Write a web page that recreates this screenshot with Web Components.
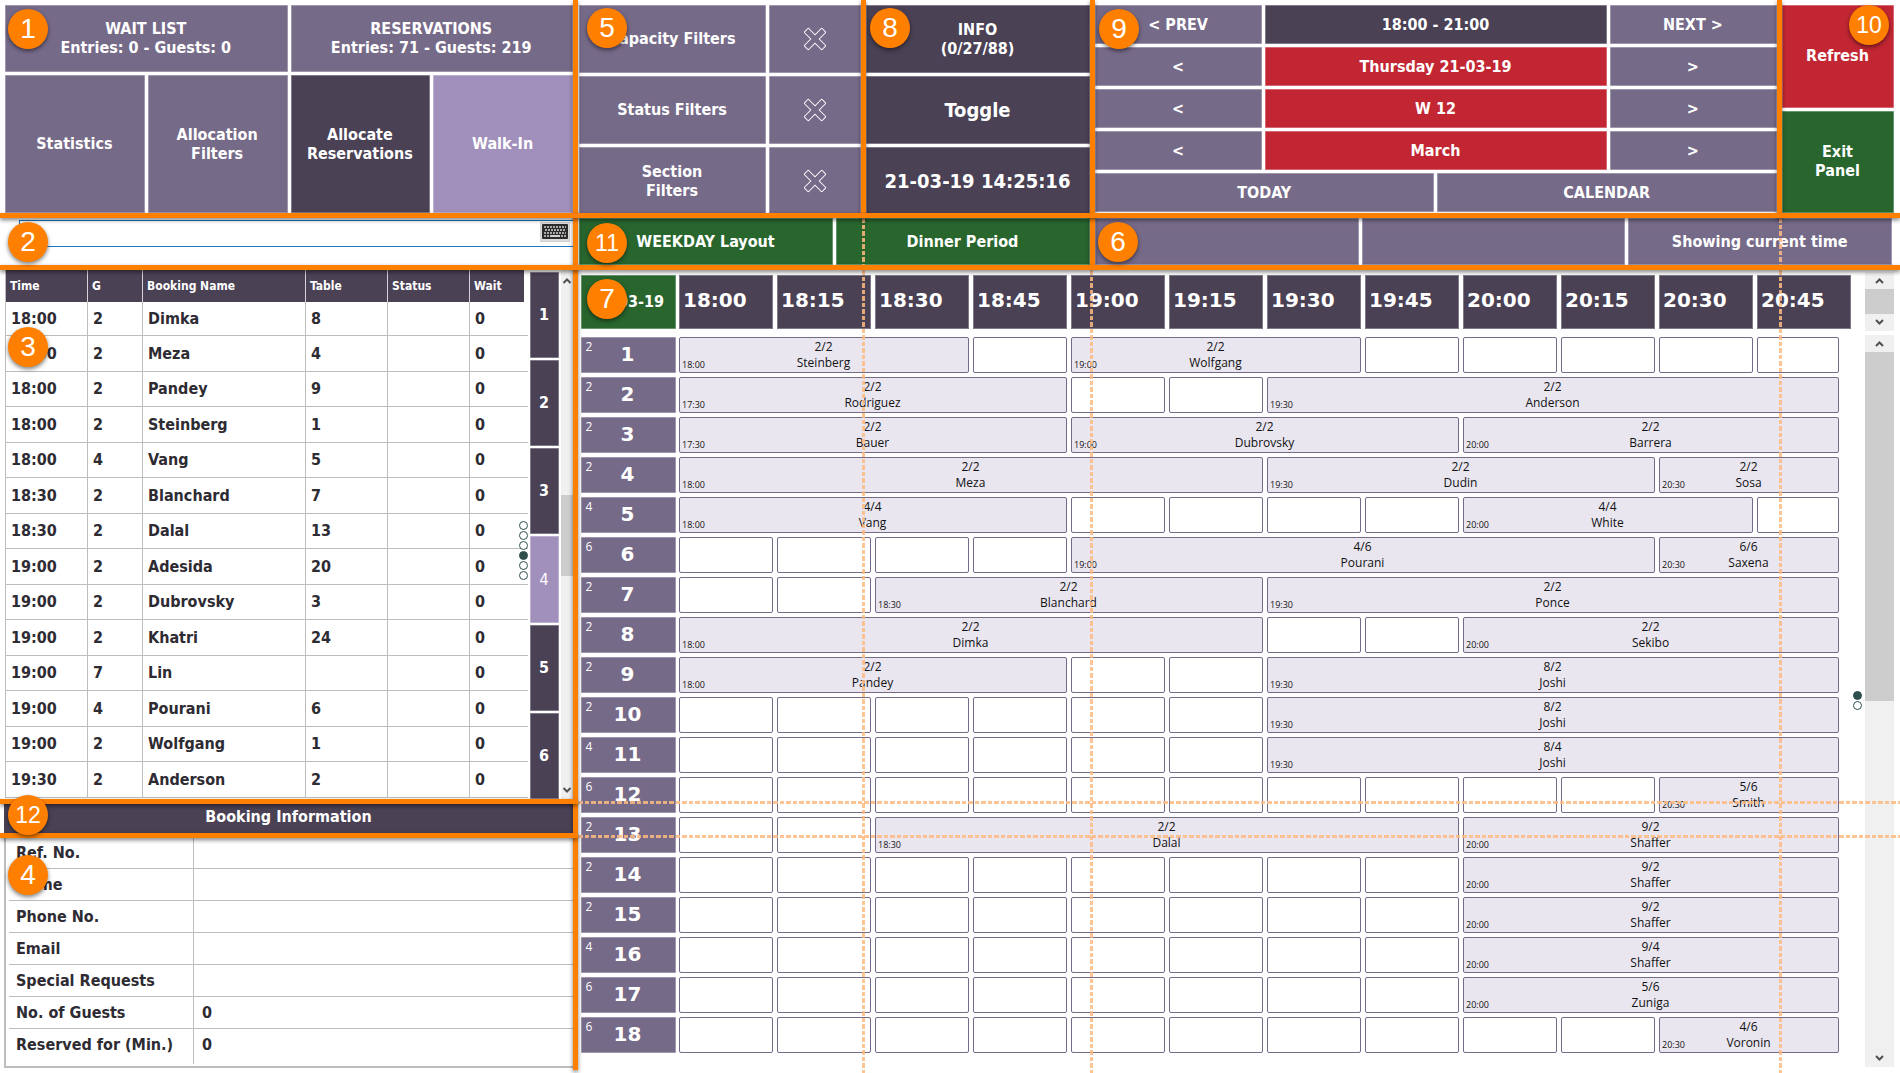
<!DOCTYPE html>
<html lang="en">
<head>
<meta charset="utf-8">
<title>Reservation Panel</title>
<style>
  html, body { margin: 0; background: #fff; }
  body {
    font-family: "DejaVu Sans Condensed", "DejaVu Sans", Tahoma, sans-serif;
    font-size: 16px; line-height: 19px; font-weight: 700; color: #2e2b33;
    --violet: #766a89; --dark: #4a4155; --lilac: #a18fbc; --red: #c22633; --green: #28662e;
    --orange: #ff8000; --rule: #bdbdbd; --cell: #e9e6f0;
    --ui: "Open Sans", "Noto Sans", sans-serif;
    --wide: "DejaVu Sans", Verdana, sans-serif;
  }
</style>
</head>
<body>
<reservation-panel></reservation-panel>

<script>
function define(name, markup, setup) {
  const template = document.createElement('template');
  template.innerHTML = markup;
  customElements.define(name, class extends HTMLElement {
    constructor() {
      super();
      this.attachShadow({ mode: 'open' }).append(template.content.cloneNode(true));
    }
    connectedCallback() {
      if (setup && !this.ready) { this.ready = true; setup(this, this.shadowRoot); }
    }
  });
}

/* Touch-style button; tone picks the fill */
define('panel-button', `
<style>
  :host { display: grid; min-width: 0; --fill: var(--violet); }
  :host([tone=dark]) { --fill: var(--dark); }
  :host([tone=lilac]) { --fill: var(--lilac); }
  :host([tone=red]) { --fill: var(--red); }
  :host([tone=green]) { --fill: var(--green); }
  button {
    margin: 0; padding: 0 5px 1px 4px; border: 0; border-radius: 1px; background: var(--fill); color: #fff;
    font: inherit; text-align: center; cursor: pointer; min-width: 0;
    box-shadow: inset 0 0 0 1px rgba(255, 255, 255, .3);
  }
  :host([size=large]) button { font-size: 20px; line-height: 24px; }
</style>
<button type="button"><slot></slot></button>`);

define('clear-icon', `
<style>:host { display: block; } svg { display: block; margin: auto; }</style>
<svg width="24" height="24" viewBox="-12 -12 24 24" aria-hidden="true">
  <path transform="rotate(45)" d="M-2-12.5H2Q3-12.5 3-11.5V-3H11.5Q12.5-3 12.5-2V2Q12.5 3 11.5 3H3V11.5Q3 12.5 2 12.5H-2Q-3 12.5-3 11.5V3H-11.5Q-12.5 3-12.5 2V-2Q-12.5-3-11.5-3H-3V-11.5Q-3-12.5-2-12.5Z" fill="none" stroke="#fff" stroke-width="1"/>
</svg>`);

/* Numbered callout floating over a panel */
define('callout-badge', `
<style>
  :host {
    position: absolute; z-index: 6; width: 40px; height: 40px; border-radius: 50%;
    background: var(--orange); color: #fff; display: grid; place-items: center;
    font: 400 28px/32px "Liberation Sans", Arial, sans-serif;
    box-shadow: 0 2px 4px rgba(0, 0, 0, .5); pointer-events: none;
  }
  :host([wide]) { font-size: 23px; }
</style>
<slot></slot>`);

define('page-dots', `
<style>
  :host { position: absolute; z-index: 1; display: grid; gap: 1px; }
  i { width: 7px; height: 7px; border: 1px solid #2f4f4f; border-radius: 50%; background: #fff; }
  i.on { background: #2f4f4f; }
</style>`, (el, root) => {
  const current = +el.getAttribute('current');
  for (let n = 1; n <= +el.getAttribute('count'); n++) {
    const dot = document.createElement('i');
    if (n === current) dot.className = 'on';
    root.append(dot);
  }
});

define('scroll-strip', `
<style>
  :host { display: flex; flex-direction: column; background: #f0f0f0; }
  svg { flex: none; width: 100%; height: 17px; display: block; }
  path { fill: none; stroke: #505050; stroke-width: 2; }
  .thumb { background: #cdcdcd; min-height: 8px; }
</style>
<svg viewBox="3 0 11 17"><path d="M5 11L8.500 7.500L12 11"/></svg>
<div class="before"></div><div class="thumb"></div><div class="after"></div>
<svg viewBox="3 0 11 17"><path d="M5 6L8.500 9.500L12 6"/></svg>`,
(el, root) => {
  const [a, b, c] = el.getAttribute('parts').split(' ');
  root.querySelector('.before').style.flex = a + ' 0 0';
  root.querySelector('.thumb').style.flex = b + ' 0 0';
  root.querySelector('.after').style.flex = c + ' 0 0';
});

define('search-box', `
<style>
  :host { display: block; padding: 2px 0 0 19px; }
  .field { display: flex; align-items: flex-start; height: 25px; border: 1px solid #1a77c4; border-right: 0; }
  input { flex: 1; min-width: 0; height: 25px; padding: 0 36px; border: 0; outline: 0; background: none; font: inherit; box-sizing: border-box; }
  button { margin: 1px 3px 0 0; padding: 0; width: 30px; height: 20px; border: 1px solid #d0d0d0; background: #dcdcdc; display: grid; justify-items: center; align-items: start; }
  svg { display: block; padding-top: 1px; }
</style>
<div class="field">
  <input type="text" aria-label="Search bookings">
  <button type="button" aria-label="On-screen keyboard">
    <svg width="26" height="15" viewBox="0 0 26 15">
      <rect width="26" height="15" rx="1" fill="#2c2c2c"/>
      <g stroke="#a8a8a8" stroke-width="2" stroke-dasharray="2 1">
        <path d="M2 3H24"/><path d="M3 6H24"/><path d="M2 9H24"/><path d="M2 12H7"/><path d="M19 12H24"/>
      </g>
      <path d="M8 12H18" stroke="#cfcfcf" stroke-width="2"/>
    </svg>
  </button>
</div>`);

define('booking-list', `
<style>
  :host { display: flex; gap: 2px; padding-left: 5px; }
  table { flex: 1; min-width: 0; table-layout: fixed; border-collapse: separate; border-spacing: 0; align-self: flex-start; }
  col.time { width: 83px; } col.g { width: 55px; } col.mid { width: 82px; } col.wait { width: 58px; }
  th { height: 32px; box-sizing: border-box; padding: 0 0 0 4px; background: var(--dark); color: #fff; font-size: 12px; line-height: 16px; text-align: left; border-right: 1px solid #d5d2da; }
  th:last-child { border-right: 4px solid #fff; }
  td { height: 36px; box-sizing: border-box; padding: 0 0 1px 5px; border-right: 1px solid var(--rule); border-bottom: 1px solid var(--rule); }
  td:last-child { border-right: 0; }
  tr:nth-child(odd) td { height: 35px; }
  tbody tr:first-child td { height: 34px; }
  td:first-child, th:first-child { border-left: 1px solid var(--rule); }
  nav { width: 29px; display: grid; grid-auto-rows: 1fr; gap: 2px; padding-top: 2px; background: #fff; }
  scroll-strip { width: 12px; padding-top: 2px; }
  .four { font-weight: 400; }
</style>
<table>
  <colgroup><col class="time"><col class="g"><col><col class="mid"><col class="mid"><col class="wait"></colgroup>
  <thead><tr><th>Time</th><th>G</th><th>Booking Name</th><th>Table</th><th>Status</th><th>Wait</th></tr></thead>
  <tbody></tbody>
</table>
<nav>
  <panel-button tone="dark">1</panel-button><panel-button tone="dark">2</panel-button>
  <panel-button tone="dark">3</panel-button><panel-button tone="lilac" class="four">4</panel-button>
  <panel-button tone="dark">5</panel-button><panel-button tone="dark">6</panel-button>
</nav>
<scroll-strip parts="206 82 206"></scroll-strip>`, (el, root) => {
  const rows = [
    ['18:00', 2, 'Dimka', 8], ['18:00', 2, 'Meza', 4], ['18:00', 2, 'Pandey', 9], ['18:00', 2, 'Steinberg', 1],
    ['18:00', 4, 'Vang', 5], ['18:30', 2, 'Blanchard', 7], ['18:30', 2, 'Dalal', 13], ['19:00', 2, 'Adesida', 20],
    ['19:00', 2, 'Dubrovsky', 3], ['19:00', 2, 'Khatri', 24], ['19:00', 7, 'Lin', ''], ['19:00', 4, 'Pourani', 6],
    ['19:00', 2, 'Wolfgang', 1], ['19:30', 2, 'Anderson', 2]];
  const body = root.querySelector('tbody');
  for (const row of rows) {
    const tr = body.insertRow();
    for (const value of [...row, '', 0]) tr.insertCell().textContent = value;
  }
});

define('booking-details', `
<style>
  :host { display: block; }
  .frame { margin: 0 0 5px 4px; padding: 0 0 2px 3px; border-left: 2px solid var(--rule); border-bottom: 2px solid var(--rule); }
  table { width: 100%; border-collapse: separate; border-spacing: 0; table-layout: fixed; }
  col:first-child { width: 185px; }
  th, td { box-sizing: border-box; height: 32px; border-bottom: 1px solid var(--rule); text-align: left; }
  th { padding: 0 0 1px 7px; border-right: 1px solid var(--rule); }
  td { padding: 0 0 1px 8px; }
  tr:first-child > * { height: 31px; }
  tr:last-child > * { height: 35px; border-bottom: 0; padding-bottom: 5px; }
</style>
<div class="frame"><table>
  <colgroup><col><col></colgroup>
  <tbody>
    <tr><th scope="row">Ref. No.</th><td></td></tr>
    <tr><th scope="row">Name</th><td></td></tr>
    <tr><th scope="row">Phone No.</th><td></td></tr>
    <tr><th scope="row">Email</th><td></td></tr>
    <tr><th scope="row">Special Requests</th><td></td></tr>
    <tr><th scope="row">No. of Guests</th><td>0</td></tr>
    <tr><th scope="row">Reserved for (Min.)</th><td>0</td></tr>
  </tbody>
</table></div>`);

define('table-timeline', `
<style>
  :host { display: flex; gap: 14px; padding: 0 6px 0 3px; }
  .main { flex: 1; min-width: 0; padding-top: 5px; }
  .head, .row { display: grid; grid-template-columns: 95px minmax(0, 1fr); grid-template-rows: minmax(0, 1fr); gap: 3px; }
  .head { height: 54px; margin-bottom: 8px; }
  .slots { display: grid; grid-template-columns: repeat(12, minmax(0, 1fr)); grid-template-rows: minmax(0, 1fr); gap: 4px; }
  .hour { display: flex; align-items: center; padding: 0 0 4px 4px; background: var(--dark); color: #fff; font: 700 20px/26px var(--wide); box-shadow: inset 0 0 0 1px rgba(255, 255, 255, .3); }
  .row { height: 36px; margin-bottom: 4px; }
  button { margin: 0; padding: 0; font: inherit; cursor: pointer; }
  .table {
    display: grid; grid-template-columns: 20px 1fr 20px; align-items: center; border: 0; border-radius: 1px;
    padding: 0 2px 2px 0;
    background: var(--violet); color: #fff; box-shadow: inset 0 0 0 1px rgba(255, 255, 255, .3);
    font: 700 20px/26px var(--wide);
  }
  .table small { align-self: start; padding-top: 2px; font: 400 12px/16px var(--ui); padding-left: 2px; text-align: center; width: 12px; }
  .slot { box-sizing: border-box; border: 1px solid var(--violet); border-radius: 2px; background: #fff; }
  .slot.last { margin-right: 12px; }
  .booking {
    display: grid; grid-template-columns: 32px minmax(0, 1fr) 32px; align-items: center; background: var(--cell);
    color: #111; font: 400 12px/16px var(--ui); text-align: center; padding: 0 1px 1px 0;
  }
  .booking time { align-self: end; font-size: 9px; line-height: 12px; padding-left: 2px; text-align: left; }
  aside { width: 29px; padding: 2px 0 6px; display: flex; flex-direction: column; gap: 4px; }
  aside .short { height: 59px; }
  aside .long { flex: 1; }
</style>
<div class="main">
  <div class="head"><panel-button tone="green">21-03-19</panel-button><div class="slots hours"></div></div>
</div>
<aside><scroll-strip class="short" parts="0 25 0"></scroll-strip><scroll-strip class="long" parts="0 349 349"></scroll-strip></aside>`,
(el, root) => {
  const make = (tag, cls, text) => {
    const node = document.createElement(tag);
    node.className = cls || '';
    if (text !== undefined) node.textContent = text;
    return node;
  };
  const hours = root.querySelector('.hours');
  for (let n = 0; n < 12; n++) {
    hours.append(make('div', 'hour', (18 + (n >> 2)) + ':' + String(n % 4 * 15).padStart(2, '0')));
  }
  /* per table: capacity, then bookings as [first slot, slots, covers, name, start] */
  const tables = [
    [2, [1, 3, '2/2', 'Steinberg', '18:00'], [5, 3, '2/2', 'Wolfgang', '19:00']],
    [2, [1, 4, '2/2', 'Rodriguez', '17:30'], [7, 6, '2/2', 'Anderson', '19:30']],
    [2, [1, 4, '2/2', 'Bauer', '17:30'], [5, 4, '2/2', 'Dubrovsky', '19:00'], [9, 4, '2/2', 'Barrera', '20:00']],
    [2, [1, 6, '2/2', 'Meza', '18:00'], [7, 4, '2/2', 'Dudin', '19:30'], [11, 2, '2/2', 'Sosa', '20:30']],
    [4, [1, 4, '4/4', 'Vang', '18:00'], [9, 3, '4/4', 'White', '20:00']],
    [6, [5, 6, '4/6', 'Pourani', '19:00'], [11, 2, '6/6', 'Saxena', '20:30']],
    [2, [3, 4, '2/2', 'Blanchard', '18:30'], [7, 6, '2/2', 'Ponce', '19:30']],
    [2, [1, 6, '2/2', 'Dimka', '18:00'], [9, 4, '2/2', 'Sekibo', '20:00']],
    [2, [1, 4, '2/2', 'Pandey', '18:00'], [7, 6, '8/2', 'Joshi', '19:30']],
    [2, [7, 6, '8/2', 'Joshi', '19:30']],
    [4, [7, 6, '8/4', 'Joshi', '19:30']],
    [6, [11, 2, '5/6', 'Smith', '20:30']],
    [2, [3, 6, '2/2', 'Dalal', '18:30'], [9, 4, '9/2', 'Shaffer', '20:00']],
    [2, [9, 4, '9/2', 'Shaffer', '20:00']],
    [2, [9, 4, '9/2', 'Shaffer', '20:00']],
    [4, [9, 4, '9/4', 'Shaffer', '20:00']],
    [6, [9, 4, '5/6', 'Zuniga', '20:00']],
    [6, [11, 2, '4/6', 'Voronin', '20:30']]];
  const main = root.querySelector('.main');
  tables.forEach(([capacity, ...bookings], index) => {
    const row = make('div', 'row');
    const label = make('button', 'table');
    label.append(make('small', '', capacity), make('span', '', index + 1));
    const slots = make('div', 'slots');
    for (let at = 1; at <= 12;) {
      const hit = bookings.find(b => b[0] === at);
      const span = hit ? hit[1] : 1;
      const slot = make(hit ? 'button' : 'div', 'slot');
      if (hit) {
        slot.classList.add('booking');
        slot.style.gridColumn = 'span ' + span;
        const text = make('span');
        text.append(make('span', '', hit[2]), document.createElement('br'), make('span', '', hit[3]));
        slot.append(make('time', '', hit[4]), text);
      }
      at += span;
      if (at > 12) slot.classList.add('last');
      slots.append(slot);
    }
    row.append(label, slots);
    main.append(row);
  });
});

define('reservation-panel', `
<style>
  :host {
    display: grid; min-height: 100vh; overflow: hidden;
    grid-template-columns: minmax(0, 573fr) 5px minmax(0, 283fr) 5px minmax(0, 224fr) 5px minmax(0, 682fr) 5px minmax(0, 118fr);
    grid-template-rows: 213px 5px 47px 5px 529fr 5px 29px 5px 235fr;
  }
  section { position: relative; min-width: 0; }
  .grid { display: grid; gap: 3px; box-sizing: border-box; }
  .lists { grid-area: 1 / 1; padding: 5px 0 0 5px; grid-template-columns: repeat(4, 1fr); grid-template-rows: 67px 1fr; }
  .lists .wide { grid-column: span 2; }
  .filters { grid-area: 1 / 3; padding: 5px 0 0 1px; grid-template-columns: 187fr 92fr; grid-auto-rows: 68px; }
  .info { grid-area: 1 / 5; padding-top: 5px; grid-auto-rows: 68px; }
  .dates { grid-area: 1 / 7; padding-top: 5px; grid-template-columns: 167fr 169fr 169fr 167fr; grid-auto-rows: 39px; }
  .dates .mid, .dates .half { grid-column: span 2; }
  .exit { grid-area: 1 / 9; padding: 5px 6px 0 0; grid-auto-rows: 1fr; }
  .search { grid-area: 3 / 1; }
  .layout { grid-area: 3 / 3 / 4 / 6; padding-left: 1px; grid-template-columns: 1fr 1fr; }
  .state { grid-area: 3 / 7 / 4 / 10; padding-right: 8px; grid-template-columns: repeat(3, 1fr); }
  .bookings { grid-area: 5 / 1; display: grid; }
  .title { grid-area: 7 / 1; margin-left: 4px; background: var(--dark); color: #fff; text-align: center; }
  h2 { margin: 0; font: inherit; line-height: 26px; }
  .details { grid-area: 9 / 1; }
  .timeline { grid-area: 5 / 3 / 10 / 10; display: grid; }
  .line { background: var(--orange); z-index: 4; box-shadow: 0 2px 4px rgba(0, 0, 0, .5); }
  .dash { z-index: 3; pointer-events: none; --on: rgba(255, 186, 128, .85); }
  .dash.v { width: 3px; justify-self: center; background: repeating-linear-gradient(var(--on) 0 5px, transparent 5px 7px, var(--on) 7px 11px, transparent 11px 13px); }
  .dash.h { height: 3px; align-self: end; background: repeating-linear-gradient(90deg, var(--on) 0 5px, transparent 5px 7px, var(--on) 7px 11px, transparent 11px 13px); }
</style>

<section class="grid lists">
  <panel-button class="wide">WAIT LIST<br>Entries: 0 - Guests: 0</panel-button>
  <panel-button class="wide">RESERVATIONS<br>Entries: 71 - Guests: 219</panel-button>
  <panel-button>Statistics</panel-button>
  <panel-button>Allocation<br>Filters</panel-button>
  <panel-button tone="dark">Allocate<br>Reservations</panel-button>
  <panel-button tone="lilac">Walk-In</panel-button>
  <callout-badge style="left:8px;top:9px">1</callout-badge>
</section>

<section class="grid filters">
  <panel-button>Capacity Filters</panel-button><panel-button><clear-icon></clear-icon></panel-button>
  <panel-button>Status Filters</panel-button><panel-button><clear-icon></clear-icon></panel-button>
  <panel-button>Section<br>Filters</panel-button><panel-button><clear-icon></clear-icon></panel-button>
  <callout-badge style="left:9px;top:8px">5</callout-badge>
</section>

<section class="grid info">
  <panel-button tone="dark">INFO<br>(0/27/88)</panel-button>
  <panel-button tone="dark" size="large">Toggle</panel-button>
  <panel-button tone="dark" size="large">21-03-19 14:25:16</panel-button>
  <callout-badge style="left:4px;top:8px">8</callout-badge>
</section>

<section class="grid dates">
  <panel-button>&lt; PREV</panel-button><panel-button class="mid" tone="dark">18:00 - 21:00</panel-button><panel-button>NEXT &gt;</panel-button>
  <panel-button>&lt;</panel-button><panel-button class="mid" tone="red">Thursday 21-03-19</panel-button><panel-button>&gt;</panel-button>
  <panel-button>&lt;</panel-button><panel-button class="mid" tone="red">W 12</panel-button><panel-button>&gt;</panel-button>
  <panel-button>&lt;</panel-button><panel-button class="mid" tone="red">March</panel-button><panel-button>&gt;</panel-button>
  <panel-button class="half">TODAY</panel-button><panel-button class="half">CALENDAR</panel-button>
  <callout-badge style="left:4px;top:9px">9</callout-badge>
</section>

<section class="grid exit">
  <panel-button tone="red">Refresh</panel-button>
  <panel-button tone="green">Exit<br>Panel</panel-button>
  <callout-badge wide style="right:11px;top:5px">10</callout-badge>
</section>

<section class="search"><search-box></search-box><callout-badge style="left:8px;top:4px">2</callout-badge></section>

<section class="grid layout">
  <panel-button tone="green">WEEKDAY Layout</panel-button><panel-button tone="green">Dinner Period</panel-button>
  <callout-badge wide style="left:9px;top:5px">11</callout-badge>
</section>

<section class="grid state">
  <panel-button></panel-button><panel-button></panel-button><panel-button>Showing current time</panel-button>
  <callout-badge style="left:3px;top:4px">6</callout-badge>
</section>

<section class="bookings">
  <booking-list></booking-list>
  <page-dots count="6" current="4" style="right:45px;top:251px"></page-dots>
  <callout-badge style="left:8px;top:57px">3</callout-badge>
</section>

<section class="title"><h2>Booking Information</h2><callout-badge wide style="left:4px;top:-9px">12</callout-badge></section>

<section class="details"><booking-details></booking-details><callout-badge style="left:8px;top:17px">4</callout-badge></section>

<section class="timeline">
  <table-timeline></table-timeline>
  <page-dots count="2" current="1" style="right:38px;top:421px"></page-dots>
  <callout-badge style="left:9px;top:9px">7</callout-badge>
</section>

<div class="dash v" style="grid-area:3/4/10/5"></div>
<div class="dash v" style="grid-area:5/6/10/7;justify-self:start"></div>
<div class="dash v" style="grid-area:3/8/10/9;justify-self:end"></div>
<div class="dash h" style="grid-area:6/3/7/10"></div>
<div class="dash h" style="grid-area:8/3/9/10"></div>

<div class="line" style="grid-area:1/2/10/3;margin-bottom:3px"></div>
<div class="line" style="grid-area:1/4/3/5"></div>
<div class="line" style="grid-area:1/6/4/7"></div>
<div class="line" style="grid-area:1/8/3/9"></div>
<div class="line" style="grid-area:2/1/3/10"></div>
<div class="line" style="grid-area:4/1/5/10"></div>
<div class="line" style="grid-area:6/1/7/3"></div>
<div class="line" style="grid-area:8/1/9/3"></div>`);
</script>
</body>
</html>
